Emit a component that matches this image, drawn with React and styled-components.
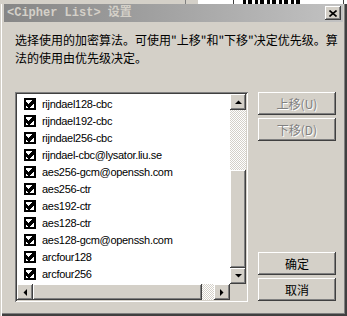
import React from 'react';
import styled, { createGlobalStyle } from 'styled-components';

const GlobalStyle = createGlobalStyle`
  html, body {
    margin: 0;
    padding: 0;
    background: #d4d0c8;
  }
  * { box-sizing: border-box; }
`;

const ciphers = [
  'rijndael128-cbc',
  'rijndael192-cbc',
  'rijndael256-cbc',
  'rijndael-cbc@lysator.liu.se',
  'aes256-gcm@openssh.com',
  'aes256-ctr',
  'aes192-ctr',
  'aes128-ctr',
  'aes128-gcm@openssh.com',
  'arcfour128',
  'arcfour256',
];

const raised = `
  background: #d4d0c8;
  box-shadow: inset -1px -1px #404040, inset 1px 1px #ffffff,
    inset -2px -2px #808080, inset 2px 2px #d4d0c8;
`;

const Arrow = ({ dir }) => {
  const pts = {
    up: '0,4 7,4 3.5,0.5',
    down: '0,0 7,0 3.5,3.5',
    left: '4,0 4,7 0.5,3.5',
    right: '0,0 0,7 3.5,3.5',
  }[dir];
  const vertical = dir === 'up' || dir === 'down';
  return (
    <svg width={vertical ? 7 : 4} height={vertical ? 4 : 7} viewBox={vertical ? '0 0 7 4' : '0 0 4 7'}>
      <polygon points={pts} fill="#000" />
    </svg>
  );
};

const CheckMark = () => (
  <svg width="8" height="8" viewBox="0 0 7 7" shapeRendering="crispEdges">
    <polygon points="0,2 0,5 2,7 3,7 7,3 7,0 6,0 2.5,3.5 1,2" fill="#000" />
  </svg>
);

export default function App() {
  return (
    <>
      <GlobalStyle />
      <Page>
        <BehindStrip />
        <Window>
          <TitleBar>
            <TitleText>&lt;Cipher List&gt; 设置</TitleText>
            <CloseButton>
              <svg width="8" height="7" viewBox="0 0 8 7">
                <path d="M0.5 0.5 L7.5 6.5 M7.5 0.5 L0.5 6.5" stroke="#000" strokeWidth="1.6" />
              </svg>
            </CloseButton>
          </TitleBar>
          <Body>
            <Description>
              选择使用的加密算法。可使用"上移"和"下移"决定优先级。算
              <br />
              法的使用由优先级决定。
            </Description>
            <MainRow>
              <ListBox>
                <Items>
                  {ciphers.map((name) => (
                    <Row key={name}>
                      <CheckBox>
                        <CheckMark />
                      </CheckBox>
                      <RowLabel>{name}</RowLabel>
                    </Row>
                  ))}
                </Items>
                <VScroll>
                  <ScrollButton>
                    <Arrow dir="up" />
                  </ScrollButton>
                  <Track $size={60} />
                  <Thumb $h={98} />
                  <ScrollButton>
                    <Arrow dir="down" />
                  </ScrollButton>
                </VScroll>
                <HScroll>
                  <ScrollButton>
                    <Arrow dir="left" />
                  </ScrollButton>
                  <Thumb $w={169} />
                  <Track $size={12} />
                  <ScrollButton>
                    <Arrow dir="right" />
                  </ScrollButton>
                </HScroll>
                <Corner />
              </ListBox>
              <ButtonColumn>
                <ButtonGroup>
                  <PushButton disabled>上移(U)</PushButton>
                  <PushButton disabled>下移(D)</PushButton>
                </ButtonGroup>
                <ButtonGroup>
                  <PushButton>确定</PushButton>
                  <PushButton>取消</PushButton>
                </ButtonGroup>
              </ButtonColumn>
            </MainRow>
          </Body>
        </Window>
      </Page>
    </>
  );
}

const Page = styled.div`
  width: 347px;
  height: 316px;
  display: flex;
  flex-direction: column;
  overflow: hidden;
`;

// part of another window peeking above the dialog
const BehindStrip = styled.div`
  height: 4px;
  flex: none;
  background:
    repeating-linear-gradient(to right, #000 0 3px, #fff 3px 5px, #000 5px 9px, #fff 9px 12px) 243px 0 / 58px 100% no-repeat,
    linear-gradient(to right, #d4d0c8 0 185px, #808080 185px 186px, #d4d0c8 186px 198px,
      #fff 198px 233px, #404040 233px 234px, #fff 234px 343px, #404040 343px 344px, #fff 344px);
`;

const Window = styled.div`
  flex: 1;
  display: flex;
  flex-direction: column;
  padding: 0 4px 4px 4px;
  background: #d4d0c8;
  box-shadow: inset 1px 0 #d4d0c8, inset 2px 0 #ffffff,
    inset -1px -1px #404040, inset -2px -2px #404040, inset -3px -3px #808080;
`;

const TitleBar = styled.div`
  height: 18px;
  flex: none;
  display: flex;
  align-items: center;
  justify-content: space-between;
  padding: 0 2px 0 3px;
  background: linear-gradient(to right, #868686, #c2c2c2);
`;

const TitleText = styled.span`
  font-family: "Liberation Mono", "Noto Sans CJK SC", monospace;
  font-weight: bold;
  font-size: 12px;
  line-height: 18px;
  color: #d4d0c8;
  white-space: nowrap;
`;

const CloseButton = styled.div`
  ${raised}
  width: 16px;
  height: 14px;
  display: flex;
  align-items: center;
  justify-content: center;
  padding-right: 1px;
`;

const Body = styled.div`
  flex: 1;
  display: flex;
  flex-direction: column;
  padding: 9px 7px 0 11px;
`;

const Description = styled.div`
  font-family: "Noto Sans CJK SC", sans-serif;
  font-size: 12px;
  line-height: 18px;
  color: #000;
  white-space: nowrap;
`;

const MainRow = styled.div`
  display: flex;
  gap: 10px;
  margin-top: 25px;
`;

const ListBox = styled.div`
  width: 233px;
  height: 210px;
  padding: 2px;
  background: #fff;
  box-shadow: inset 1px 1px #808080, inset -1px -1px #ffffff,
    inset 2px 2px #404040, inset -2px -2px #d4d0c8;
  display: grid;
  grid-template-columns: 1fr 16px;
  grid-template-rows: 1fr 16px;
`;

const Items = styled.div`
  overflow: hidden;
  padding-top: 1px;
  background: #fff;
`;

const Row = styled.div`
  height: 17px;
  display: flex;
  align-items: center;
  padding-left: 7px;
  gap: 6px;
`;

const CheckBox = styled.div`
  width: 12px;
  height: 12px;
  border: 2px solid #000;
  background: #fff;
  display: flex;
  align-items: center;
  justify-content: center;
  flex: none;
`;

const RowLabel = styled.span`
  font-family: "Liberation Sans", Arial, sans-serif;
  font-size: 11px;
  letter-spacing: -0.3px;
  color: #000;
  white-space: nowrap;
`;

const VScroll = styled.div`
  display: flex;
  flex-direction: column;
`;

const HScroll = styled.div`
  display: flex;
`;

const ScrollButton = styled.div`
  ${raised}
  width: 16px;
  height: 16px;
  flex: none;
  display: flex;
  align-items: center;
  justify-content: center;
`;

const Track = styled.div`
  flex: 0 0 ${(p) => p.$size}px;
  background: repeating-conic-gradient(#ffffff 0 25%, #d4d0c8 0 50%) 0 0 / 2px 2px;
`;

const Thumb = styled.div`
  ${raised}
  flex: 0 0 ${(p) => p.$h || p.$w}px;
`;

const Corner = styled.div`
  background: #d4d0c8;
`;

const ButtonColumn = styled.div`
  width: 78px;
  height: 210px;
  display: flex;
  flex-direction: column;
  justify-content: space-between;
  padding-bottom: 1px;
`;

const ButtonGroup = styled.div`
  display: flex;
  flex-direction: column;
  gap: 3px;
`;

const PushButton = styled.div`
  ${raised}
  height: 23px;
  display: flex;
  align-items: center;
  justify-content: center;
  font-family: "Noto Sans CJK SC", sans-serif;
  font-size: 12px;
  color: ${(p) => (p.disabled ? '#808080' : '#000')};
  text-shadow: ${(p) => (p.disabled ? '1px 1px #ffffff' : 'none')};
`;
